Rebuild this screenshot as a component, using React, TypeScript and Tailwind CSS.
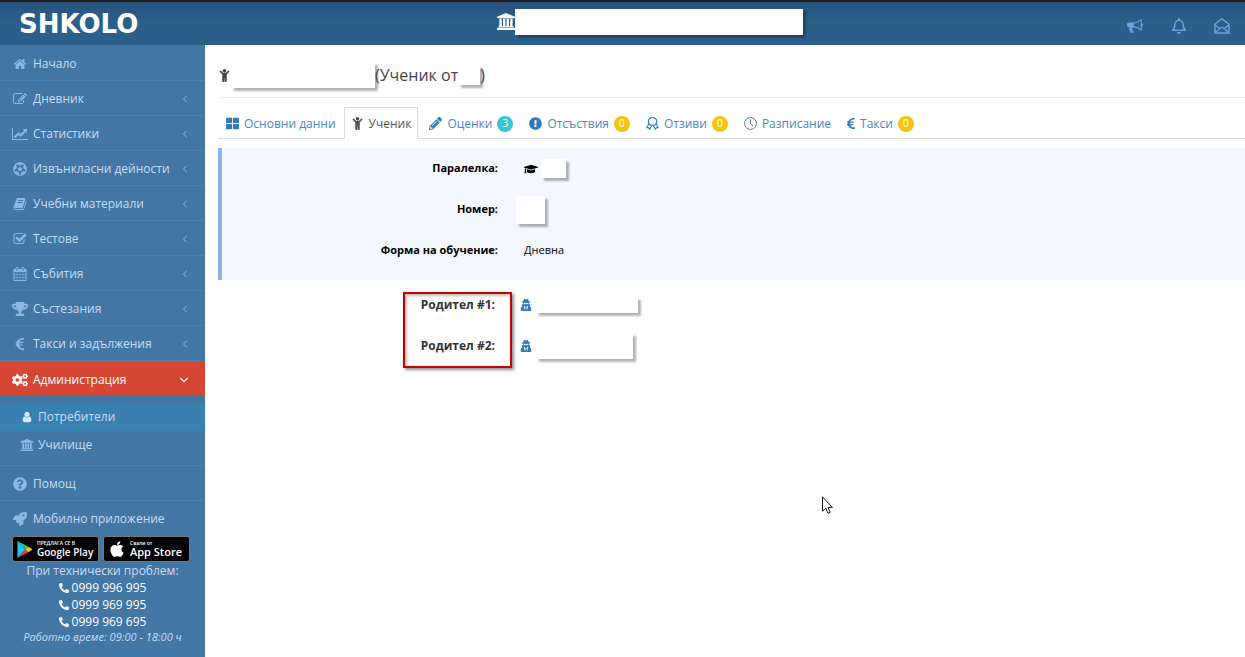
import React from 'react';
import clsx from 'clsx';
import { ChevronDown, ChevronLeft } from 'lucide-react';
import {
  FaApple,
  FaChild,
  FaCogs,
  FaEuroSign,
  FaExclamationCircle,
  FaFutbol,
  FaGraduationCap,
  FaPencilAlt,
  FaPhoneAlt,
  FaQuestionCircle,
  FaRegBell,
  FaRocket,
  FaThLarge,
  FaTrophy,
  FaUserSecret,
} from 'react-icons/fa';

type IconProps = { className?: string };
type IconType = React.ComponentType<IconProps>;

const glyph = (d: string, viewBox = '0 0 1792 1792'): IconType => {
  const Glyph: React.FC<IconProps> = ({ className }) => (
    <svg viewBox={viewBox} fill="currentColor" className={className} aria-hidden="true">
      <path d={d} />
    </svg>
  );
  return Glyph;
};

const HomeIcon = glyph(
  'M1472 992v480q0 26-19 45t-45 19h-384v-384h-256v384h-384q-26 0-45-19t-19-45v-480q0-1 .5-3t.5-3l575-474 575 474q1 2 1 6zm223-69l-62 74q-8 9-21 11h-3q-13 0-21-7l-692-577-692 577q-12 8-24 7-13-2-21-11l-62-74q-8-10-7-23.5t11-21.5l719-599q32-26 76-26t76 26l244 204v-195q0-14 9-23t23-9h192q14 0 23 9t9 23v408l219 182q10 8 11 21.5t-7 23.5z'
);
const EditIcon = glyph(
  'M888 1184l116-116-152-152-116 116v56h96v96h56zm440-720q-16-16-33 1l-350 350q-17 17-1 33t33-1l350-350q17-17 1-33zm80 594v190q0 119-84.5 203.5t-203.5 84.5h-832q-119 0-203.5-84.5t-84.5-203.5v-832q0-119 84.5-203.5t203.5-84.5h832q63 0 117 25 15 7 18 23 3 17-9 29l-49 49q-14 14-32 8-23-6-45-6h-832q-66 0-113 47t-47 113v832q0 66 47 113t113 47h832q66 0 113-47t47-113v-126q0-13 9-22l64-64q15-15 35-7t20 29zm-96-738l288 288-672 672h-288v-288zm444 132l-92 92-288-288 92-92q28-28 68-28t68 28l152 152q28 28 28 68t-28 68z'
);
const ChartIcon = glyph(
  'M2048 1536v128h-2048v-1536h128v1408h1920zm-128-1248v435q0 21-19.5 29.5t-35.5-7.5l-121-121-633 633q-10 10-23 10t-23-10l-233-233-416 416-192-192 585-585q10-10 23-10t23 10l233 233 464-464-121-121q-16-16-7.5-35.5t29.5-19.5h435q14 0 23 9t9 23z',
  '0 0 2048 1792'
);
const BookIcon = glyph(
  'M1703 478q40 57 18 129l-275 906q-19 64-76.5 107.5t-122.5 43.5h-923q-77 0-148.5-53.5t-99.5-131.5q-24-67-2-127 0-4 3-27t4-37q1-8-3-21.5t-3-19.5q2-11 8-21t16.5-23.5 16.5-23.5q23-38 45-91.5t30-91.5q3-10 .5-30t-.5-28q3-11 17-28t17-23q21-36 42-92t25-90q1-9-2.5-32t.5-28q4-13 22-30.5t22-22.5q19-26 42.5-84.5t27.5-96.5q1-8-3-25.5t-2-26.5q2-8 9-18t18-23 17-21q8-12 16.5-30.5t15-35 16-36 19.5-32 26.5-23.5 36-11.5 47.5 5.5l-1 3q38-9 51-9h761q74 0 114 56t18 130l-274 906q-36 119-71.5 153.5t-128.5 34.5h-869q-27 0-38 15-11 16-1 43 24 70 144 70h923q29 0 56-15.5t35-41.5l300-987q7-22 5-57 38 15 59 43zm-1064 2q-4 13 2 22.5t20 9.5h608q13 0 25.5-9.5t16.5-22.5l21-64q4-13-2-22.5t-20-9.5h-608q-13 0-25.5 9.5t-16.5 22.5zm-83 256q-4 13 2 22.5t20 9.5h608q13 0 25.5-9.5t16.5-22.5l21-64q4-13-2-22.5t-20-9.5h-608q-13 0-25.5 9.5t-16.5 22.5z'
);
const CheckIcon = glyph(
  'M1472 930v318q0 119-84.5 203.5t-203.5 84.5h-832q-119 0-203.5-84.5t-84.5-203.5v-832q0-119 84.5-203.5t203.5-84.5h832q63 0 117 25 15 7 18 23 3 17-9 29l-49 49q-10 10-23 10-3 0-9-2-23-6-45-6h-832q-66 0-113 47t-47 113v832q0 66 47 113t113 47h832q66 0 113-47t47-113v-254q0-13 9-22l64-64q10-10 23-10 6 0 12 3 20 8 20 29zm231-489l-814 814q-24 24-57 24t-57-24l-430-430q-24-24-24-57t24-57l110-110q24-24 57-24t57 24l263 263 647-647q24-24 57-24t57 24l110 110q24 24 24 57t-24 57z'
);
const CalendarIcon = glyph(
  'M192 1664h288v-288h-288v288zm352 0h320v-288h-320v288zm-352-352h288v-320h-288v320zm352 0h320v-320h-320v320zm-352-384h288v-288h-288v288zm736 736h320v-288h-320v288zm-384-736h320v-288h-320v288zm768 736h288v-288h-288v288zm-384-352h320v-320h-320v320zm-352-864v-288q0-13-9.5-22.5t-22.5-9.5h-64q-13 0-22.5 9.5t-9.5 22.5v288q0 13 9.5 22.5t22.5 9.5h64q13 0 22.5-9.5t9.5-22.5zm736 864h288v-320h-288v320zm-384-384h320v-288h-320v288zm384 0h288v-288h-288v288zm32-480v-288q0-13-9.5-22.5t-22.5-9.5h-64q-13 0-22.5 9.5t-9.5 22.5v288q0 13 9.5 22.5t22.5 9.5h64q13 0 22.5-9.5t9.5-22.5zm384-64v1280q0 52-38 90t-90 38h-1408q-52 0-90-38t-38-90v-1280q0-52 38-90t90-38h128v-96q0-66 47-113t113-47h64q66 0 113 47t47 113v96h384v-96q0-66 47-113t113-47h64q66 0 113 47t47 113v96h128q52 0 90 38t38 90z'
);
const UserIcon = glyph(
  'M1536 1399q0 109-62.5 187t-150.5 78h-854q-88 0-150.5-78t-62.5-187q0-85 8.5-160.5t31.5-152 58.5-131 94-89 134.5-34.5q131 128 313 128t313-128q76 0 134.5 34.5t94 89 58.5 131 31.5 152 8.5 160.5zm-256-887q0 159-112.5 271.5t-271.5 112.5-271.5-112.5-112.5-271.5 112.5-271.5 271.5-112.5 271.5 112.5 112.5 271.5z'
);
const SchoolIcon = glyph(
  'M960 0l960 384v128h-128q0 26-20.5 45t-48.5 19h-1526q-28 0-48.5-19t-20.5-45h-128v-128zm-704 640h256v768h128v-768h256v768h128v-768h256v768h128v-768h256v768h59q28 0 48.5 19t20.5 45v64h-1664v-64q0-26 20.5-45t48.5-19h59v-768zm1595 960q28 0 48.5 19t20.5 45v128h-1920v-128q0-26 20.5-45t48.5-19h1782z',
  '0 0 1920 1792'
);
const BullhornIcon = glyph(
  'M1664 640q53 0 90.5 37.5t37.5 90.5-37.5 90.5-90.5 37.5v384q0 52-38 90t-90 38q-417-347-812-380-58 19-91 66t-31 100.5 40 92.5q-20 33-23 65.5t6 58 33.5 55 48 50 61.5 50.5q-29 58-111.5 83t-168.5 11.5-132-55.5q-7-23-29.5-87.5t-32-94.5-23-89-15-101 3.5-98.5 22-110.5h-122q-66 0-113-47t-47-113v-192q0-66 47-113t113-47h480q435 0 896-384 52 0 90 38t38 90v384zm-128 604v-954q-394 302-768 343v270q377 42 768 341z'
);

const MailOpenIcon: React.FC<IconProps> = ({ className }) => (
  <svg viewBox="0 0 16 16" fill="none" stroke="currentColor" strokeWidth="1.4" strokeLinejoin="round" className={className} aria-hidden="true">
    <path d="M1 6.3 6.8 1.6Q8 .6 9.2 1.6L15 6.3V15H1zM1.2 7 6 10.8M14.8 7 10 10.8M1.4 14.6 6.6 10Q8 8.8 9.4 10l5.2 4.6" />
  </svg>
);

const AwardIcon: React.FC<IconProps> = ({ className }) => (
  <svg viewBox="0 0 14 14" fill="none" stroke="currentColor" strokeWidth="1.2" strokeLinejoin="round" className={className} aria-hidden="true">
    <path d="M5 .8h4l2.4 2.4v3.3L9 8.9H5L2.6 6.5V3.2z" />
    <path d="M3.2 7 .8 11.6l2-.1 1 1.8L6.3 8.9M10.8 7l2.4 4.6-2-.1-1 1.8-2.5-4.4" />
  </svg>
);

const ClockIcon: React.FC<IconProps> = ({ className }) => (
  <svg viewBox="0 0 14 14" fill="none" stroke="currentColor" className={className} aria-hidden="true">
    <circle cx="7" cy="7" r="6.4" />
    <path d="M7 2.8V7l2.6 2.6" />
  </svg>
);

const navItems: { label: string; icon: IconType; expandable?: boolean; active?: boolean }[] = [
  { label: 'Начало', icon: HomeIcon },
  { label: 'Дневник', icon: EditIcon, expandable: true },
  { label: 'Статистики', icon: ChartIcon, expandable: true },
  { label: 'Извънкласни дейности', icon: FaFutbol, expandable: true },
  { label: 'Учебни материали', icon: BookIcon, expandable: true },
  { label: 'Тестове', icon: CheckIcon, expandable: true },
  { label: 'Събития', icon: CalendarIcon, expandable: true },
  { label: 'Състезания', icon: FaTrophy, expandable: true },
  { label: 'Такси и задължения', icon: FaEuroSign, expandable: true },
  { label: 'Администрация', icon: FaCogs, expandable: true, active: true },
];

const tabs: { label: string; icon: IconType; count?: number; active?: boolean; narrow?: boolean }[] = [
  { label: 'Основни данни', icon: FaThLarge },
  { label: 'Ученик', icon: FaChild, active: true },
  { label: 'Оценки', icon: FaPencilAlt, count: 3 },
  { label: 'Отсъствия', icon: FaExclamationCircle, count: 0 },
  { label: 'Отзиви', icon: AwardIcon, count: 0 },
  { label: 'Разписание', icon: ClockIcon },
  { label: 'Такси', icon: FaEuroSign, count: 0, narrow: true },
];

const phones = ['0999 996 995', '0999 969 995', '0999 969 695'];

const Blank: React.FC<{ className: string }> = ({ className }) => (
  <span className={clsx('inline-block shrink-0 bg-white shadow-[3px_3px_2px_rgba(0,0,0,0.3)]', className)} />
);

const Header: React.FC = () => (
  <header className="flex h-[45px] items-center border-t-2 border-[#1c1c1c] bg-linear-to-b from-[#27527c] to-[#2c608c] to-50%">
    <a href="#" className="w-[205px] shrink-0 pl-[19px] font-['DejaVu_Sans',sans-serif] text-[26px] leading-none font-bold text-white">
      SHKOLO
    </a>
    <div className="flex flex-1 items-center justify-center pr-8 pb-1">
      <SchoolIcon className="h-[17px] w-[18px] text-white" />
      <Blank className="h-[26px] w-72" />
    </div>
    <div className="flex w-[118px] shrink-0 items-center justify-between pt-1 pr-[15px] text-[#6ba3db]">
      <button aria-label="Съобщения"><BullhornIcon className="size-4" /></button>
      <button aria-label="Известия"><FaRegBell className="size-4" /></button>
      <button aria-label="Поща"><MailOpenIcon className="size-4" /></button>
    </div>
  </header>
);

const NavLink: React.FC<(typeof navItems)[number]> = ({ label, icon: Icon, expandable, active }) => (
  <a
    href="#"
    className={clsx(
      'flex h-[35px] items-center pt-0.5 pr-[14px] pl-3',
      active ? 'bg-[#d64635] text-white' : 'border-b border-[#4b80b3] text-[#c9def4]'
    )}
  >
    <Icon className={clsx('mr-[5px] h-[14px] w-4 shrink-0', active ? 'text-white' : 'text-[#8cb7e2]')} />
    <span className="flex-1 whitespace-nowrap">{label}</span>
    {expandable && (active ? <ChevronDown className="size-[14px]" /> : <ChevronLeft className="size-3 text-[#8cb7e2]" />)}
  </a>
);

const Sidebar: React.FC = () => (
  <aside className="w-[205px] shrink-0 bg-[#4276a5] pt-px text-xs">
    <nav>
      {navItems.map(item => (
        <NavLink key={item.label} {...item} />
      ))}
      <div className="border-b border-[#4b80b3] pt-[7px] pb-[6px] text-[#c9def4]">
        <a href="#" className="flex h-7 items-center gap-1 bg-[#3880b0] pl-5">
          <UserIcon className="h-3 w-[14px] text-[#dcebfa]" />
          Потребители
        </a>
        <a href="#" className="flex h-7 items-center gap-1 pl-5">
          <SchoolIcon className="h-3 w-[14px] text-[#8cb7e2]" />
          Училище
        </a>
      </div>
      <NavLink label="Помощ" icon={FaQuestionCircle} />
      <a href="#" className="flex h-[35px] items-center pl-3 text-[#c9def4]">
        <FaRocket className="mr-[5px] h-[14px] w-4 text-[#8cb7e2]" />
        Мобилно приложение
      </a>
    </nav>

    <div className="flex gap-1 pl-3 text-white">
      <a href="#" className="flex h-[26px] w-[87px] items-center gap-1 rounded-[3px] border border-[#777] bg-black pl-1 whitespace-nowrap">
        <svg viewBox="0 0 16 18" className="h-[17px] w-4 shrink-0" aria-hidden="true">
          <path d="M0 0v18l8.5-9z" fill="#20c4f4" />
          <path d="M0 0l11.5 6.2L8.5 9z" fill="#1fd07a" />
          <path d="M0 18l11.5-6.2L8.5 9z" fill="#f23b4c" />
          <path d="M11.5 6.2L16 9l-4.5 2.8L8.5 9z" fill="#fdcb0a" />
        </svg>
        <span className="flex flex-col">
          <span className="text-[5px] leading-[6px] font-semibold">ПРЕДЛАГА СЕ В</span>
          <span className="text-[10px] leading-3 font-semibold">Google Play</span>
        </span>
      </a>
      <a href="#" className="flex h-[26px] w-[87px] items-center gap-1 rounded-[3px] border border-[#777] bg-black pl-1 whitespace-nowrap">
        <FaApple className="h-[18px] w-[18px] shrink-0" />
        <span className="flex flex-col">
          <span className="text-[5px] leading-[6px] font-semibold">Свали от</span>
          <span className="text-[11px] leading-3 font-semibold">App Store</span>
        </span>
      </a>
    </div>

    <div className="text-center leading-[17px] text-[#c9def4]">
      <p>При технически проблем:</p>
      {phones.map(phone => (
        <a key={phone} href="#" className="flex items-center justify-center gap-[3px] text-white">
          <FaPhoneAlt className="size-[10px]" />
          {phone}
        </a>
      ))}
      <p className="text-[11px] leading-[14px] italic">Работно време: 09:00 - 18:00 ч</p>
    </div>
  </aside>
);

const Tabs: React.FC = () => (
  <nav className="flex h-8 items-end border-b border-[#ddd] text-xs text-[#4a86c0]">
    {tabs.map(({ label, icon: Icon, count, active, narrow }) => (
      <a
        key={label}
        href="#"
        className={clsx(
          'flex h-8 items-center gap-[5px] whitespace-nowrap',
          active
            ? '-mb-px mr-[3px] border border-b-0 border-[#ddd] bg-white px-[6px] text-[#555]'
            : 'px-2 pt-[3px]'
        )}
      >
        <Icon className={clsx('h-[13px]', narrow ? 'w-2' : 'w-[13px]', active ? 'text-[#555]' : 'text-[#337ab7]')} />
        {label}
        {count !== undefined && (
          <span
            className={clsx(
              'flex size-4 items-center justify-center rounded-full text-[10px] text-white',
              count > 0 ? 'bg-[#36c6d3]' : 'bg-[#f1c40f]'
            )}
          >
            {count}
          </span>
        )}
      </a>
    ))}
  </nav>
);

const App: React.FC = () => {
  return (
    <div className="flex min-h-screen flex-col bg-white font-['Open_Sans','Noto_Sans',sans-serif]">
      <Header />
      <div className="flex flex-1">
        <Sidebar />
        <main className="min-w-0 flex-1 pl-[13px]">
          <h1 className="flex h-[53px] items-center border-b border-[#eee] pt-2 text-base text-[#444]">
            <FaChild className="size-[13px]" />
            <Blank className="h-[26px] w-36" />
            (Ученик от
            <Blank className="h-5 w-[22px]" />)
          </h1>

          <div className="pt-[9px]">
            <Tabs />
          </div>

          <dl className="mt-[9px] grid grid-cols-[276px_1fr] auto-rows-[41px] items-center gap-x-[26px] border-l-4 border-[#8db4e6] bg-[#f4f8fe] pb-[9px] text-[11px] text-black">
            <dt className="text-right font-bold">Паралелка:</dt>
            <dd className="flex items-center gap-[3px]">
              <FaGraduationCap className="h-3 w-[14px]" />
              <Blank className="h-[19px] w-[25px]" />
            </dd>
            <dt className="text-right font-bold">Номер:</dt>
            <dd className="-ml-2 flex">
              <Blank className="h-7 w-[29px]" />
            </dd>
            <dt className="text-right font-bold">Форма на обучение:</dt>
            <dd>Дневна</dd>
          </dl>

          <div className="mt-3 flex gap-2 text-xs text-[#333]">
            <div className="flex w-[294px] justify-end">
              <div className="h-[76px] w-[109px] border-2 border-[#c80000] pr-[15px] text-right font-bold shadow-[2px_2px_3px_rgba(0,0,0,0.45),inset_2px_2px_3px_rgba(0,0,0,0.25)]">
                <p className="pt-px leading-5">Родител #1:</p>
                <p className="pt-[21px] leading-5">Родител #2:</p>
              </div>
            </div>
            <div>
              <div className="flex h-[26px] items-center gap-1">
                <FaUserSecret className="size-3 text-[#337ab7]" />
                <Blank className="h-4 w-[102px]" />
              </div>
              <div className="mt-[15px] flex h-[26px] items-center gap-1">
                <FaUserSecret className="size-3 text-[#337ab7]" />
                <Blank className="h-[26px] w-[97px]" />
              </div>
            </div>
          </div>
        </main>
      </div>

      {/* Mouse pointer */}
      <svg viewBox="0 0 12 19" className="pointer-events-none absolute top-[496px] left-[822px] h-[19px] w-3" aria-hidden="true">
        <path d="M.5 .8v14.4l3.3-3 2.2 5.2 2.2-1-2.2-5h4.4z" fill="#fff" stroke="#111" />
      </svg>
    </div>
  );
};

export default App;
